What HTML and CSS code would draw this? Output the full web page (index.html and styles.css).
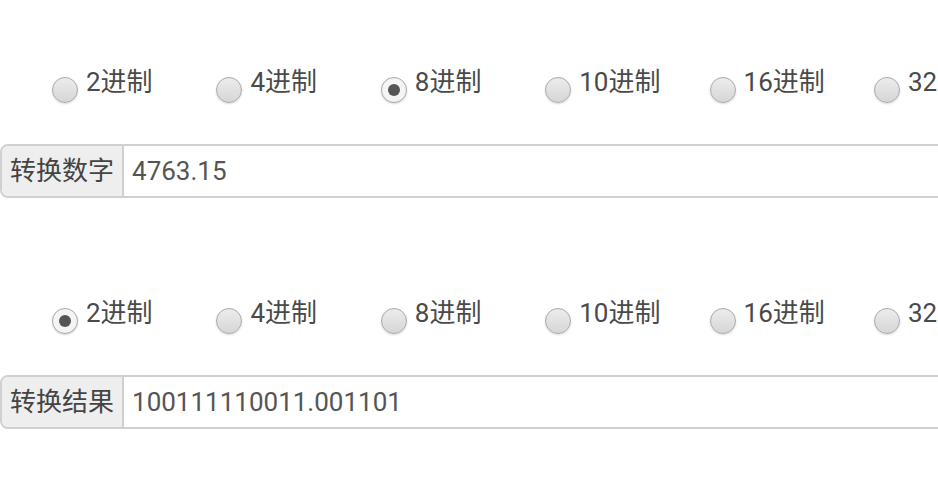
FILE: index.html
```html
<!DOCTYPE html>
<html lang="zh-CN">

<head>
    <title>进制转换</title>
    <meta charset="utf-8" />
    <meta name="viewport" content="width=device-width, initial-scale=1.0" />
    <link rel="stylesheet" href="styles.css">
</head>

<body>
    <div id="page">

        <div class="section">
            <div class="radio-row">
                <label class="radio-item"><input type="radio" name="from" value="2"><span>2进制</span></label>
                <label class="radio-item"><input type="radio" name="from" value="4"><span>4进制</span></label>
                <label class="radio-item"><input type="radio" name="from" value="8" checked><span>8进制</span></label>
                <label class="radio-item"><input type="radio" name="from" value="10"><span>10进制</span></label>
                <label class="radio-item"><input type="radio" name="from" value="16"><span>16进制</span></label>
                <label class="radio-item"><input type="radio" name="from" value="32"><span>32进制</span></label>
            </div>
            <div class="input-group">
                <span class="addon">转换数字</span>
                <input class="field" type="text" value="4763.15">
            </div>
        </div>

        <div class="section second">
            <div class="radio-row">
                <label class="radio-item"><input type="radio" name="to" value="2" checked><span>2进制</span></label>
                <label class="radio-item"><input type="radio" name="to" value="4"><span>4进制</span></label>
                <label class="radio-item"><input type="radio" name="to" value="8"><span>8进制</span></label>
                <label class="radio-item"><input type="radio" name="to" value="10"><span>10进制</span></label>
                <label class="radio-item"><input type="radio" name="to" value="16"><span>16进制</span></label>
                <label class="radio-item"><input type="radio" name="to" value="32"><span>32进制</span></label>
            </div>
            <div class="input-group">
                <span class="addon">转换结果</span>
                <input class="field" type="text" value="100111110011.001101" readonly>
            </div>
        </div>

    </div>
</body>

</html>
```

FILE: styles.css
```css
html,
body {
    margin: 0;
    padding: 0;
    background: #fff;
    overflow: hidden;
}

#page {
    width: 1000px;
    font-family: Roboto, "Noto Sans CJK SC", sans-serif;
    font-size: 26px;
    color: #4a4a4a;
}

.section {
    padding-top: 67px;
}

.section.second {
    padding-top: 100px;
}

.radio-row {
    display: flex;
    padding-left: 52px;
    height: 30px;
    line-height: 30px;
}

.radio-item {
    flex: 0 0 164.4px;
    display: flex;
    align-items: flex-start;
    white-space: nowrap;
}

.radio-item span {
    margin-left: 8px;
}

/* radio drawn by hand, android-ish */
.radio-item input {
    appearance: none;
    -webkit-appearance: none;
    margin: 10px 0 0 0;
    width: 26px;
    height: 26px;
    flex: 0 0 26px;
    border-radius: 50%;
    border: 1px solid #aaa;
    background: linear-gradient(#ececec, #d6d6d6);
    box-shadow: 0 1px 2px rgba(0, 0, 0, 0.15);
    box-sizing: border-box;
    position: relative;
}

.radio-item input:checked {
    background: #f4f4f4;
}

.radio-item input:checked::after {
    content: "";
    position: absolute;
    left: 6px;
    top: 6px;
    width: 12px;
    height: 12px;
    border-radius: 50%;
    background: #555;
}

.input-group {
    display: flex;
    margin-top: 47px;
    height: 54px;
    border: 2px solid #d0d0d0;
    border-radius: 8px 0 0 8px;
    box-sizing: border-box;
}

.addon {
    flex: 0 0 auto;
    padding: 0 8px 0 8px;
    line-height: 50px;
    background: #eee;
    border-right: 2px solid #d0d0d0;
    border-radius: 6px 0 0 6px;
    color: #444;
}

.field {
    flex: 1;
    border: none;
    outline: none;
    padding: 0 8px;
    font: inherit;
    color: #555;
    background: #fff;
}
```
